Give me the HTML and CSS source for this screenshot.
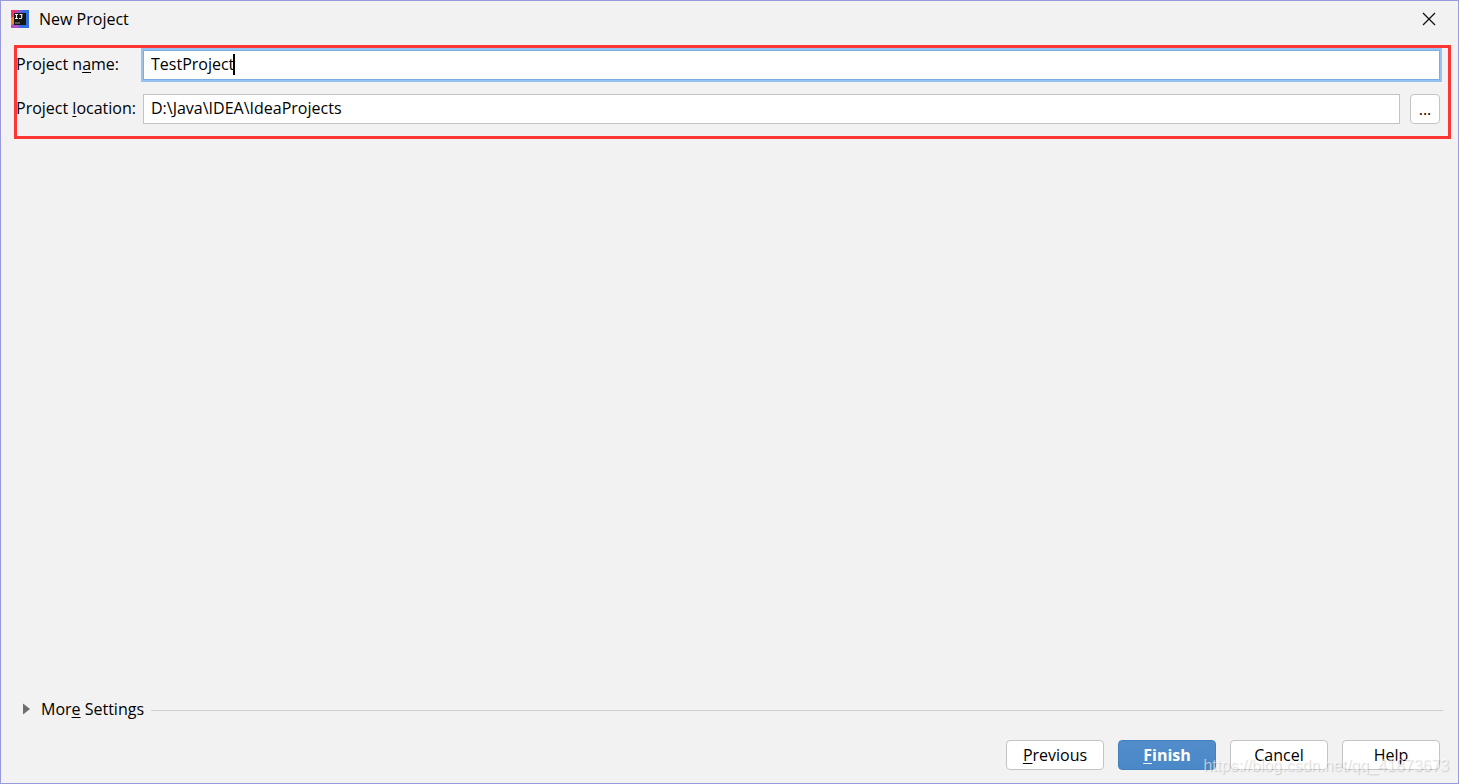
FILE: index.html
```html
<!DOCTYPE html>
<html lang="en">
<head>
    <meta charset="UTF-8">
    <meta name="viewport" content="width=device-width, initial-scale=1.0">
    <title>New Project</title>
    <link rel="stylesheet" href="styles.css">
</head>
<body>
    <div class="dialog">
        <header class="title-bar">
            <svg class="app-icon" viewBox="0 0 18 18" aria-hidden="true">
                <rect width="18" height="18" fill="#2f6fe0"/>
                <path d="M0 0h8L3 10 0 9z" fill="#f0326e"/>
                <path d="M7 0h5L9 4H3z" fill="#8c55c8"/>
                <path d="M0 8l4-2v8l-4 2z" fill="#f58a2c"/>
                <path d="M0 15l5-2 5 5H0z" fill="#b04fc8"/>
                <rect x="3" y="3" width="12" height="12" fill="#161616"/>
                <path d="M4 4.500h3M5.500 4.500v4M4 8.500h3M8.500 4.500h3M10.700 4.500v3q0 1-1 1H8" fill="none" stroke="#eee" stroke-width="1.100"/>
                <rect x="4" y="12.500" width="5" height="1" fill="#999"/>
            </svg>
            <h1 class="title">New Project</h1>
            <button type="button" class="close-btn" aria-label="Close">
                <svg width="14" height="14" viewBox="0 0 14 14"><path d="M1 1l12 12M13 1L1 13" stroke="#111" stroke-width="1.300"/></svg>
            </button>
        </header>

        <form id="project-form" class="project-form">
            <label for="project-name">Project n<u>a</u>me:</label>
            <div class="field">
                <div class="input-wrap">
                    <input type="text" id="project-name" class="text-input active" value="TestProject">
                    <span class="caret"></span>
                </div>
            </div>
            <label for="project-location">Project <u>l</u>ocation:</label>
            <div class="field">
                <input type="text" id="project-location" class="text-input" value="D:\Java\IDEA\IdeaProjects">
                <button type="button" class="browse-btn" aria-label="Browse">...</button>
            </div>
        </form>

        <div class="more-settings">
            <button type="button" class="more-btn">
                <svg width="7" height="12" viewBox="0 0 7 12"><path d="M0 0.500L7 6 0 11.500z" fill="#6e6e6e"/></svg>
                <span>Mor<u>e</u> Settings</span>
            </button>
            <span class="divider"></span>
        </div>

        <footer class="actions">
            <button type="button" class="btn"><u>P</u>revious</button>
            <button type="submit" form="project-form" class="btn btn-primary"><u>F</u>inish</button>
            <button type="button" class="btn">Cancel</button>
            <button type="button" class="btn">Help</button>
        </footer>
        <span class="watermark">https://blog.csdn.net/qq_41873673</span>
    </div>
</body>
</html>
```
FILE: styles.css
```css
* {
    box-sizing: border-box;
}

body {
    margin: 0;
    font-family: "Open Sans", "Noto Sans", sans-serif;
    font-size: 16px;
    line-height: 22px;
    color: #000;
}

button, input {
    font: inherit;
    color: inherit;
}

u {
    text-decoration-thickness: 1px;
    text-underline-offset: 2px;
    text-decoration-skip-ink: none;
}

.dialog {
    position: relative;
    display: flex;
    flex-direction: column;
    min-height: 100vh;
    background: #f2f2f2;
    border: 1px solid #9999dc;
}

.title-bar {
    display: flex;
    align-items: center;
    height: 36px;
    padding: 0 18px 0 10px;
}

.app-icon {
    width: 18px;
    height: 18px;
    margin-right: 10px;
}

.title {
    flex: 1;
    margin: 0;
    font-size: 16px;
    font-weight: normal;
}

.close-btn {
    display: flex;
    padding: 4px;
    border: none;
    background: none;
}

.project-form {
    display: grid;
    grid-template-columns: 126px 1fr;
    row-gap: 14px;
    align-items: center;
    margin: 8px 7px 0 13px;
    padding: 2px 8px 12px 0;
    border: 3px solid #fc3535;
}

.project-form label {
    margin-left: -1px;
    padding-bottom: 2px;
    white-space: nowrap;
}

.field {
    display: flex;
    gap: 10px;
}

.input-wrap {
    position: relative;
    flex: 1;
}

.text-input {
    flex: 1;
    width: 100%;
    min-width: 0;
    height: 30px;
    padding: 0 7px 2px;
    border: 1px solid #c4c4c4;
    background: #fff;
    outline: none;
}

.text-input.active {
    border-color: #7daee0;
    box-shadow: 0 0 0 2px #97c3f3;
    caret-color: transparent;
}

.caret {
    position: absolute;
    top: 4px;
    left: 90px;
    width: 2px;
    height: 21px;
    background: #000;
}

.browse-btn {
    width: 30px;
    height: 30px;
    padding: 0;
    border: 1px solid #c4c4c4;
    border-radius: 4px;
    background: #fff;
}

.more-settings {
    display: flex;
    align-items: center;
    gap: 7px;
    margin-top: auto;
    padding: 0 15px 0 22px;
}

.more-btn {
    display: flex;
    align-items: center;
    gap: 11px;
    padding: 0 0 2px;
    border: none;
    background: none;
}

.divider {
    flex: 1;
    height: 1px;
    background: #cfcfcf;
}

.actions {
    display: flex;
    justify-content: flex-end;
    gap: 14px;
    padding: 18px 18px 13px;
}

.btn {
    width: 98px;
    height: 30px;
    padding: 0;
    border: 1px solid #c4c4c4;
    border-radius: 4px;
    background: #fff;
}

.btn-primary {
    border-color: #4380bf;
    background: linear-gradient(#528ccb, #4a88c7);
    color: #fff;
    font-weight: bold;
}

.watermark {
    position: absolute;
    right: 9px;
    bottom: 6px;
    font-family: "Liberation Sans", Arial, sans-serif;
    color: rgba(255, 255, 255, 0.6);
    text-shadow: 1px 1px 1px rgba(0, 0, 0, 0.16);
    pointer-events: none;
}
```
